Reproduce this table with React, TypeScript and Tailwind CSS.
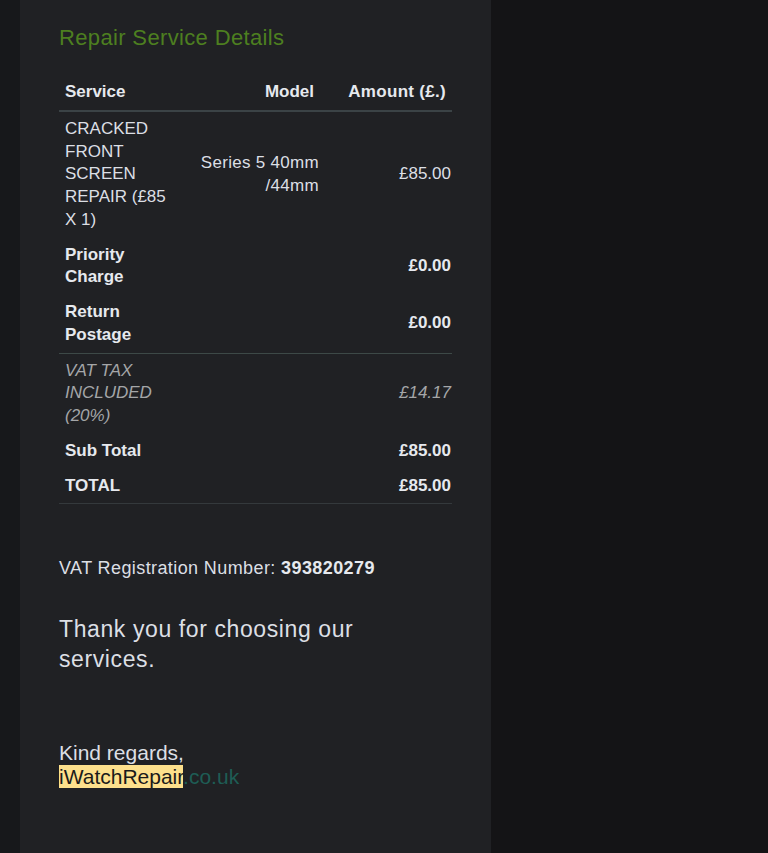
const rows = [
    { service: 'CRACKED FRONT SCREEN REPAIR (£85 X 1)', model: 'Series 5 40mm /44mm', amount: '£85.00', bold: false },
    { service: 'Priority Charge', model: '', amount: '£0.00', bold: true },
    { service: 'Return Postage', model: '', amount: '£0.00', bold: true },
];

export default function App() {
    return (
        <div className="flex h-[853px] w-full overflow-hidden bg-[#141416] font-['Liberation_Sans',Arial,sans-serif]">
            <div className="w-[20px] shrink-0 bg-[#17181b]" />
            <div className="w-[471px] shrink-0 bg-[#202124] pl-[39px] pt-[24px]">
                {/* title */}
                <h2 className="mb-[23px] text-[22px] leading-[28px] tracking-[0.35px] text-[#4d7f20]">Repair Service Details</h2>

                {/* table */}
                <div className="w-[393px] text-[17px] leading-[22.75px] text-[#dcdfe4]">
                    <div className="grid grid-cols-[121px_145px_127px] border-b-2 border-[#3b4346] font-bold text-[#e6e9ee]">
                        <div className="py-[6px] pl-[6px]">Service</div>
                        <div className="py-[6px] pr-[11px] text-right">Model</div>
                        <div className="py-[6px] pr-[6px] text-right tracking-[0.3px]">Amount (£.)</div>
                    </div>

                    {rows.map((row) => (
                        <div key={row.service} className="grid grid-cols-[121px_145px_127px]">
                            <div className={`py-[6px] pl-[6px] ${row.bold ? 'font-bold text-[#e6e9ee]' : ''}`}>{row.service}</div>
                            <div className="flex items-center justify-end py-[6px] pr-[6px] text-right tracking-[0.3px]">{row.model}</div>
                            <div className={`flex items-center justify-end py-[6px] pr-[1px] ${row.bold ? 'font-bold text-[#e6e9ee]' : ''}`}>
                                {row.amount}
                            </div>
                        </div>
                    ))}

                    <div className="grid grid-cols-[121px_145px_127px] border-t border-[#3d4947] italic text-[#a4a6a8]">
                        <div className="py-[6px] pl-[6px]">VAT TAX INCLUDED (20%)</div>
                        <div />
                        <div className="flex items-center justify-end py-[6px] pr-[1px]">£14.17</div>
                    </div>
                    <div className="grid grid-cols-[121px_145px_127px] font-bold text-[#e6e9ee]">
                        <div className="py-[6px] pl-[6px]">Sub Total</div>
                        <div />
                        <div className="py-[6px] pr-[1px] text-right">£85.00</div>
                    </div>
                    <div className="grid grid-cols-[121px_145px_127px] border-b border-[#34393c] font-bold text-[#e6e9ee]">
                        <div className="py-[6px] pl-[6px]">TOTAL</div>
                        <div />
                        <div className="py-[6px] pr-[1px] text-right">£85.00</div>
                    </div>
                </div>

                <p className="mt-[52px] text-[18px] leading-[24px] tracking-[0.4px] text-[#dcdfe4]">
                    VAT Registration Number: <span className="font-bold text-[#e6e9ee]">393820279</span>
                </p>

                <p className="mt-[34px] w-[320px] text-[23px] leading-[30px] tracking-[0.6px] text-[#dcdfe4]">
                    Thank you for choosing our services.
                </p>

                <div className="mt-[67px] text-[21px] leading-[24px] text-[#dcdfe4]">
                    <p>Kind regards,</p>
                    <p>
                        <span className="bg-[#fde08c] text-[#1a1a1a]">iWatchRepair</span>
                        <span className="text-[#1e5d55]">.co.uk</span>
                    </p>
                </div>
            </div>
            <div className="flex-1 bg-[#141416]" />
        </div>
    );
}
